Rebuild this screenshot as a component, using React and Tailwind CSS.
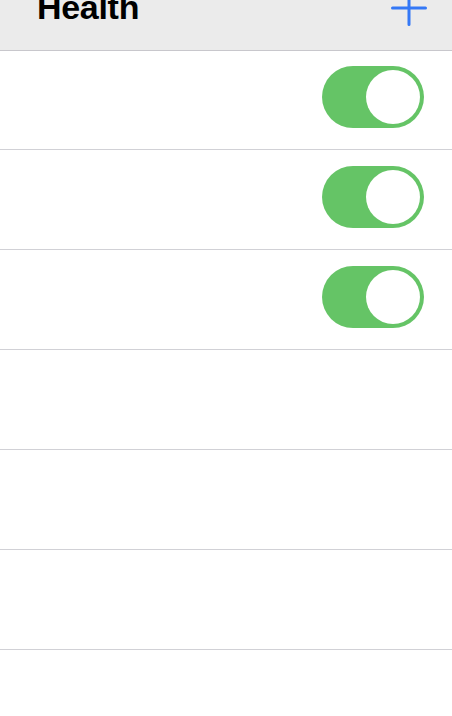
import React, { useState } from 'react'

const Toggle = ({ on, onChange }) => (
  <button
    type="button"
    onClick={onChange}
    className={`relative h-[62px] w-[102px] rounded-full transition-colors ${on ? 'bg-[#65c466]' : 'bg-[#e5e5ea]'}`}
  >
    <span
      className={`absolute top-[4px] h-[54px] w-[54px] rounded-full bg-white transition-all ${on ? 'left-[44px]' : 'left-[4px]'}`}
    />
  </button>
)

export default function App() {
  const [rows, setRows] = useState([true, true, true, null, null, null, null])

  const flip = (i) => setRows(rows.map((r, j) => (j === i ? !r : r)))

  return (
    <div className="min-h-[716px] w-[452px] overflow-hidden bg-white font-['Liberation_Sans',Arial,sans-serif]">
      {/* Header, scrolled partly out of view */}
      <div className="-mt-[20px] flex h-[71px] items-end justify-between border-b border-[#c8c7cc] bg-[#ebebeb] pl-[37px] pr-[25px] pb-[26px]">
        <h1 className="m-0 text-[34px] font-bold leading-none tracking-[-0.3px] text-black">Health</h1>
        <svg width="36" height="36" viewBox="0 0 36 36" className="-mb-[2px]" stroke="#3478f6" strokeWidth="3" strokeLinecap="round">
          <path d="M18 1.5v33M1.5 18h33" />
        </svg>
      </div>

      {/* Rows */}
      <div>
        {rows.map((on, i) => (
          <div
            key={i}
            className={`flex items-start justify-end border-b border-[#d1d1d6] pr-[28px] ${i === 0 ? 'h-[99px] pt-[15px]' : 'h-[100px] pt-[16px]'}`}
          >
            {on !== null && <Toggle on={on} onChange={() => flip(i)} />}
          </div>
        ))}
      </div>
    </div>
  )
}
